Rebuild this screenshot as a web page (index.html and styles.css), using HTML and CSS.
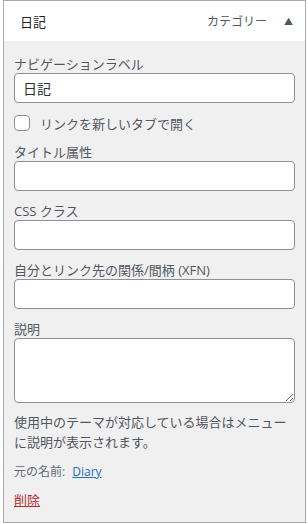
FILE: index.html
```html
<!DOCTYPE html>
<html lang="ja">
<head>
    <meta charset="UTF-8">
    <meta name="viewport" content="width=device-width, initial-scale=1.0">
    <title>メニュー項目</title>
    <link rel="stylesheet" href="styles.css">
</head>
<body>
    <div class="menu-item">
        <div class="item-bar">
            <span class="item-title">日記</span>
            <span class="item-controls">
                <span class="item-type">カテゴリー</span>
                <span class="item-toggle">&#9650;</span>
            </span>
        </div>

        <div class="item-settings">
            <div class="field">
                <label>ナビゲーションラベル</label>
                <input type="text" class="text-input" value="日記">
            </div>

            <label class="check-row">
                <span class="check-box"></span>
                <span>リンクを新しいタブで開く</span>
            </label>

            <div class="field">
                <label>タイトル属性</label>
                <input type="text" class="text-input">
            </div>

            <div class="field">
                <label>CSS クラス</label>
                <input type="text" class="text-input">
            </div>

            <div class="field">
                <label>自分とリンク先の関係/間柄 (XFN)</label>
                <input type="text" class="text-input">
            </div>

            <div class="field">
                <label>説明</label>
                <textarea class="text-area"></textarea>
            </div>

            <p class="field-desc">使用中のテーマが対応している場合はメニューに説明が表示されます。</p>

            <p class="original">元の名前: <a href="#">Diary</a></p>

            <a href="#" class="delete-link">削除</a>
        </div>
    </div>
</body>
</html>
```

FILE: styles.css
```css
body {
    margin: 0;
    padding: 0 2px 0 3px;
    background: #ffffff;
    font-family: "Open Sans", "Noto Sans CJK JP", sans-serif;
    font-size: 13px;
    color: #3c434a;
}
.menu-item {
    border: 1px solid #a7aaad;
    background: #f0f0f1;
}
.item-bar {
    display: flex;
    justify-content: space-between;
    align-items: center;
    height: 40px;
    padding: 0 12px 0 16px;
    background: #ffffff;
}
.item-title {
    font-size: 13px;
    color: #1d2327;
}
.item-controls {
    display: flex;
    align-items: center;
    gap: 17px;
}
.item-type {
    font-size: 12px;
    color: #50575e;
}
.item-toggle {
    font-size: 9px;
    color: #50575e;
}
.item-settings {
    padding: 14px 10px 13px;
}
.field {
    display: flex;
    flex-direction: column;
    margin-bottom: 11px;
}
.field label {
    line-height: 18px;
    color: #50575e;
}
.text-input,
.text-area {
    box-sizing: border-box;
    width: 100%;
    height: 30px;
    margin: 0;
    padding: 0 8px;
    border: 1px solid #8c8f94;
    border-radius: 4px;
    background: #ffffff;
    font-family: inherit;
    font-size: 14px;
    color: #2c3338;
}
.text-area {
    height: 65px;
    display: block;
}
.check-row {
    display: flex;
    align-items: center;
    gap: 10px;
    height: 18px;
    margin: 11px 0 11px;
    color: #50575e;
}
.check-box {
    box-sizing: border-box;
    width: 16px;
    height: 16px;
    border: 1px solid #8c8f94;
    border-radius: 4px;
    background: #ffffff;
}
.field-desc {
    margin: -2px 0 11px;
    line-height: 20px;
    color: #50575e;
}
.original {
    margin: 0 0 10px;
    line-height: 18px;
    font-size: 12px;
    color: #646970;
}
.original a {
    margin-left: 4px;
    color: #2271b1;
}
.delete-link {
    display: inline-block;
    line-height: 18px;
    color: #b32d2e;
}
```
